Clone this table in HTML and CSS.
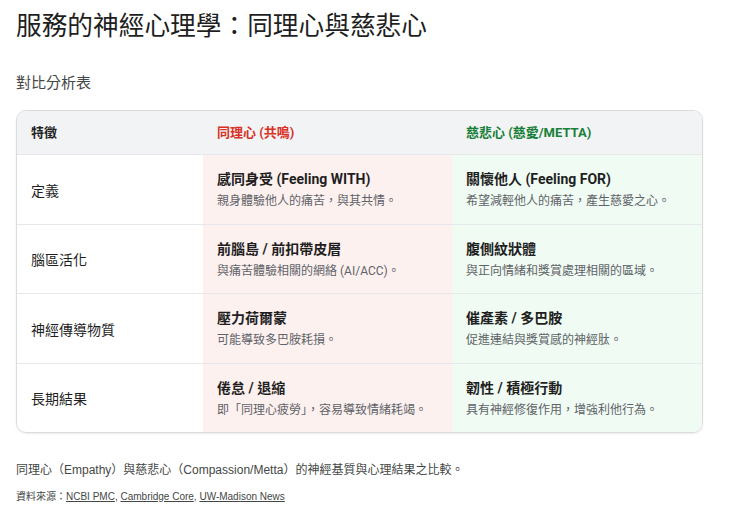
FILE: index.html
```html
<!DOCTYPE html>
<html lang="zh-Hant">
<head>
<meta charset="utf-8">
<title>服務的神經心理學</title>
<link rel="stylesheet" href="styles.css">
</head>
<body>
<main class="page">
  <h1 class="title">服務的神經心理學：同理心與慈悲心</h1>
  <h2 class="subtitle">對比分析表</h2>
  <div class="table">
    <div class="cell head">特徵</div>
    <div class="cell head red-text">同理心 (共鳴)</div>
    <div class="cell head green-text">慈悲心 (慈愛/METTA)</div>

    <div class="cell label">定義</div>
    <div class="cell red"><div class="t">感同身受 (Feeling WITH)</div><div class="s">親身體驗他人的痛苦，與其共情。</div></div>
    <div class="cell green"><div class="t">關懷他人 (Feeling FOR)</div><div class="s">希望減輕他人的痛苦，產生慈愛之心。</div></div>

    <div class="cell label">腦區活化</div>
    <div class="cell red"><div class="t">前腦島 / 前扣帶皮層</div><div class="s">與痛苦體驗相關的網絡 (AI/ACC)。</div></div>
    <div class="cell green"><div class="t">腹側紋狀體</div><div class="s">與正向情緒和獎賞處理相關的區域。</div></div>

    <div class="cell label">神經傳導物質</div>
    <div class="cell red"><div class="t">壓力荷爾蒙</div><div class="s">可能導致多巴胺耗損。</div></div>
    <div class="cell green"><div class="t">催產素 / 多巴胺</div><div class="s">促進連結與獎賞感的神經肽。</div></div>

    <div class="cell label last">長期結果</div>
    <div class="cell red last"><div class="t">倦怠 / 退縮</div><div class="s">即「同理心疲勞」，容易導致情緒耗竭。</div></div>
    <div class="cell green last"><div class="t">韌性 / 積極行動</div><div class="s">具有神經修復作用，增強利他行為。</div></div>
  </div>
  <p class="caption">同理心（Empathy）與慈悲心（Compassion/Metta）的神經基質與心理結果之比較。</p>
  <p class="source">資料來源：<a href="#">NCBI PMC</a>, <a href="#">Cambridge Core</a>, <a href="#">UW-Madison News</a></p>
</main>
</body>
</html>
```
FILE: styles.css
```css
html, body {
  margin: 0;
  padding: 0;
  background: #ffffff;
}
body {
  font-family: Roboto, "Noto Sans CJK TC", sans-serif;
  color: #1f1f1f;
}
.page {
  padding: 9px 16px 0 16px;
}
.title {
  margin: 0;
  font-size: 25.7px;
  line-height: 34px;
  font-weight: 400;
  color: #1f1f1f;
}
.subtitle {
  margin: 30px 0 0 0;
  font-size: 15px;
  line-height: 20px;
  font-weight: 400;
  color: #444746;
}
.table {
  margin-top: 17px;
  width: 687px;
  box-sizing: border-box;
  display: grid;
  grid-template-columns: 186px 249px 1fr;
  border: 1px solid #dadce0;
  border-radius: 10px;
  overflow: hidden;
  box-shadow: 0 1px 2px rgba(0,0,0,0.08);
}
.cell {
  padding: 14px 14px 13.5px 14px;
  border-bottom: 1px solid #e6e8eb;
  box-sizing: border-box;
}
.cell.last {
  border-bottom: none;
}
.head {
  background: #f2f3f5;
  font-size: 13px;
  line-height: 17px;
  font-weight: 700;
  padding: 13px 14px;
  color: #1f1f1f;
}
.red-text { color: #d93025; }
.green-text { color: #188038; }
.label {
  display: flex;
  align-items: center;
  font-size: 14px;
  color: #1f1f1f;
}
.red { background: #fdf1f0; }
.green { background: #effbf3; }
.t {
  font-size: 14px;
  line-height: 20px;
  font-weight: 700;
  color: #1f1f1f;
  margin-bottom: 3px;
}
.s {
  font-size: 12px;
  line-height: 18px;
  color: #5f6368;
}
.caption {
  margin: 28px 0 0 0;
  font-family: "Liberation Sans", "Noto Sans CJK TC", sans-serif;
  font-size: 12px;
  line-height: 18px;
  color: #444746;
}
.source {
  margin: 11px 0 0 0;
  font-family: "Liberation Sans", "Noto Sans CJK TC", sans-serif;
  font-size: 10px;
  line-height: 14px;
  color: #444746;
}
.source a {
  color: #444746;
  text-decoration: underline;
}
```
